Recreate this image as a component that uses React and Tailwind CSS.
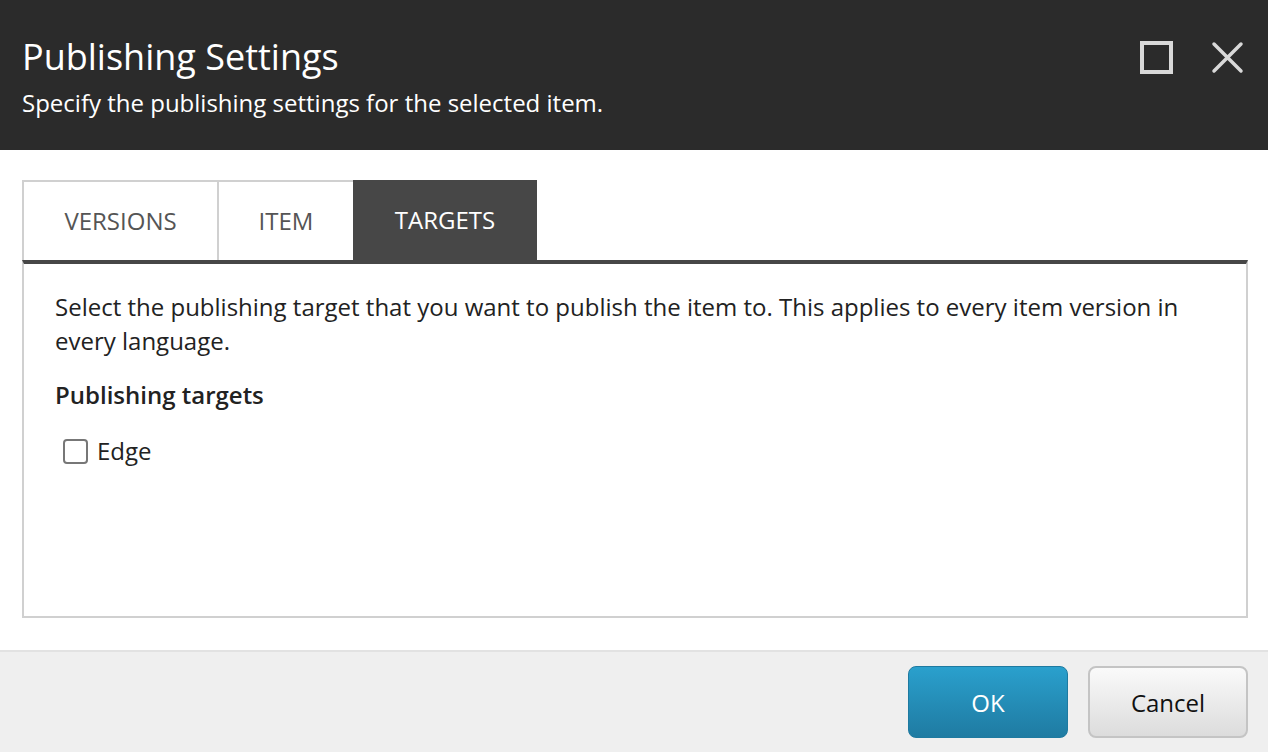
import React from "react";

const tabs = ["VERSIONS", "ITEM", "TARGETS"];

const App = () => {
  return (
    <div className="w-[1268px] h-[752px] flex flex-col bg-white font-['Open_Sans',sans-serif] overflow-hidden">
      {/* header */}
      <div className="h-[150px] bg-[#2b2b2b] flex justify-between pl-[22px] pr-[24px] pt-[33px]">
        <div>
          <h1 className="text-[36px] leading-[48px] text-white">Publishing Settings</h1>
          <p className="text-[24px] leading-[32px] text-white mt-[6px]">
            Specify the publishing settings for the selected item.
          </p>
        </div>
        <div className="flex items-start gap-[38px] pt-[8px]">
          <svg width="33" height="33" viewBox="0 0 33 33">
            <rect x="2" y="2" width="29" height="29" fill="none" stroke="#d9d9d9" strokeWidth="4" />
          </svg>
          <svg width="33" height="33" viewBox="0 0 33 33">
            <path d="M3 3 L30 30 M30 3 L3 30" stroke="#d9d9d9" strokeWidth="3.5" strokeLinecap="round" />
          </svg>
        </div>
      </div>

      {/* body */}
      <div className="flex-1 pl-[22px] pr-[20px] pt-[30px] pb-[32px] flex flex-col">
        <div className="flex h-[80px]">
          {tabs.map((t, i) => (
            <div
              key={t}
              className={
                i === 2
                  ? "w-[184px] bg-[#474747] text-white text-[24px] flex items-center justify-center"
                  : i === 0
                  ? "w-[195px] border-l-2 border-t-2 border-[#d0d0d0] text-[#555] text-[24px] flex items-center justify-center"
                  : "w-[136px] border-l-2 border-t-2 border-[#d0d0d0] text-[#555] text-[24px] flex items-center justify-center"
              }
            >
              {t}
            </div>
          ))}
        </div>
        <div className="flex-1 border-t-4 border-t-[#474747] border-x-2 border-b-2 border-[#d0d0d0] pl-[31px] pr-[40px] pt-[26px]">
          <p className="text-[24px] leading-[34px] text-[#222]">
            Select the publishing target that you want to publish the item to. This applies to every item version in every language.
          </p>
          <p className="text-[24px] leading-[34px] font-semibold text-[#222] mt-[20px]">Publishing targets</p>
          <label className="flex items-center gap-[9px] mt-[24px] ml-[8px]">
            <span className="w-[25px] h-[25px] rounded-[4px] border-2 border-[#777] bg-white" />
            <span className="text-[24px] leading-[30px] text-[#222]">Edge</span>
          </label>
        </div>
      </div>

      {/* footer */}
      <div className="h-[102px] bg-[#efefef] border-t-2 border-[#e2e2e2] flex justify-end items-center gap-[20px] px-[20px]">
        <button className="w-[160px] h-[72px] rounded-[8px] bg-gradient-to-b from-[#2aa0cd] to-[#1f7ba2] border border-[#1e7aa0] text-white text-[24px] leading-[32px] pt-[2px]">
          OK
        </button>
        <button className="w-[160px] h-[72px] rounded-[8px] bg-gradient-to-b from-[#fafafa] to-[#dcdcdc] border-2 border-[#c4c4c4] text-[#111] text-[24px] leading-[32px] pt-[2px]">
          Cancel
        </button>
      </div>
    </div>
  );
};

export default App;
